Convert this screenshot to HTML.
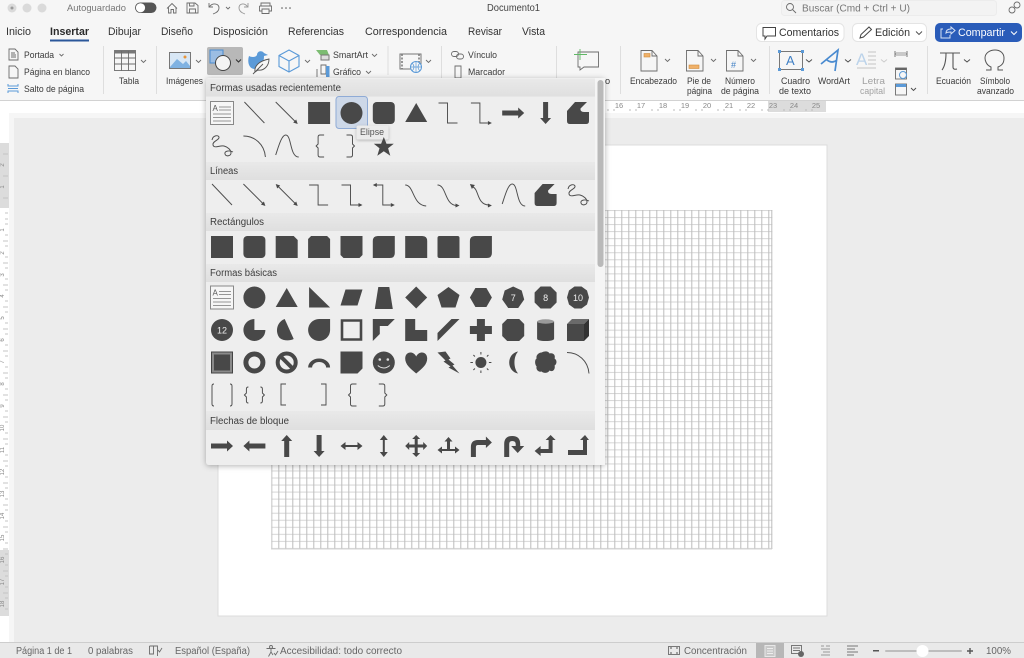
<!DOCTYPE html>
<html lang="es"><head><meta charset="utf-8"><title>Documento1</title>
<style>
html,body{margin:0;padding:0;background:#ececec;width:1024px;height:658px;overflow:hidden}
svg{display:block;position:absolute;left:0;top:0;filter:blur(.35px)}
text{font-family:"Liberation Sans",sans-serif;fill:#404040;font-size:9px}
.t{font-size:11px;fill:#333}
.s{font-size:9.8px;fill:#666}
.h{font-size:9.8px;fill:#3c3c3c}
.r{font-size:9.2px;fill:#3a3a3a}
.n{font-size:7.5px;fill:#888}
.ln{fill:none;stroke:#4c4c4c;stroke-width:.95}
.ic{fill:none;stroke:#6c6c6c;stroke-width:.9}
.bl{fill:none;stroke:#5b9ad8;stroke-width:1.1}
.d{fill:#484848}
</style></head><body>
<svg width="1024" height="658" viewBox="0 0 1024 658" xmlns="http://www.w3.org/2000/svg">
<defs>
<pattern id="grid" x="271.3" y="210" width="7" height="7.04" patternUnits="userSpaceOnUse">
<rect x="0" y="0" width="7" height="1" fill="#d6d6d6"/>
<rect x="0" y="0" width="1" height="7.04" fill="#bcbcbc"/>
</pattern>
<filter id="sh" x="-10%" y="-10%" width="120%" height="120%"><feDropShadow dx="0" dy="1" stdDeviation="3" flood-color="#000" flood-opacity=".3"/></filter>
<filter id="sh2" x="-20%" y="-20%" width="140%" height="140%"><feDropShadow dx="0" dy="1" stdDeviation="1.5" flood-color="#000" flood-opacity=".25"/></filter>
<linearGradient id="band" x1="0" y1="0" x2="0" y2="1"><stop offset="0" stop-color="#e9e9e9"/><stop offset="1" stop-color="#dfdfdf"/></linearGradient>
<g id="tb"><rect x="-11.5" y="-11.5" width="23" height="23" fill="#f6f6f6" stroke="#888"/><text x="-9.5" y="-2" style="font-size:8px;fill:#555">A</text><path d="M-3-6H9M-3-3H9M-9 1H9M-9 4.500H9M-9 8H9" stroke="#777" fill="none" stroke-width=".8"/></g>
<g id="line"><path class="ln" d="M-10-11L10 10"/></g>
<g id="arr"><path class="ln" d="M-11-11L9 9"/><path class="d" d="M11 11L6.500 9.500 9.500 6.500Z"/></g>
<g id="darr"><path class="ln" d="M-9-9L9 9"/><path class="d" d="M11 11L6.500 9.500 9.500 6.500ZM-11-11L-6.500-9.500-9.500-6.500Z"/></g>
<g id="elb"><path class="ln" d="M-10-10H-1V10H9"/></g>
<g id="elba"><path class="ln" d="M-10-10H-1V10H7"/><path class="d" d="M11 10L7 8V12Z"/></g>
<g id="elbd"><path class="ln" d="M-8-10H-1V10H7"/><path class="d" d="M11 10L7 8V12ZM-11-10L-7-12V-8Z"/></g>
<g id="cv"><path class="ln" d="M-11-10C-2-10-4 10 10 11"/></g>
<g id="cva"><path class="ln" d="M-11-10C-2-10-4 10 8 10.500"/><path class="d" d="M11 10.500L7 8.500V12.500Z"/></g>
<g id="cvd"><path class="ln" d="M-8-8C-2-6-4 10 8 10"/><path class="d" d="M11 10.500L7 8.500V12.500ZM-11-11L-6-10-9-6Z"/></g>
<path id="sq" class="d" d="M-11-11H11V11H-11Z"/>
<circle id="ci" class="d" r="11"/>
<rect id="rr" class="d" x="-11" y="-11" width="22" height="22" rx="4"/>
<path id="tr" class="d" d="M0-10L11 9H-11Z"/>
<path id="ra" class="d" d="M-11-2.500H5V-5.500L11 0 5 5.500V2.500H-11Z"/>
<path id="la" class="d" d="M11-2.500H-5V-5.500L-11 0-5 5.500V2.500H11Z"/>
<path id="da" class="d" d="M-2.500-11V5H-5.500L0 11 5.500 5H2.500V-11Z"/>
<path id="ua" class="d" d="M-2.500 11V-5H-5.500L0-11 5.500-5H2.500V11Z"/>
<path id="ff" class="d" d="M-11-2L-3-11H9L2.500-4.500Q2-1 6-1H11V8Q11 11 8 11H-8Q-11 11-11 8Z"/>
<g id="sc"><path class="ln" d="M-10-6C-9-11-4-11-3-9-2-6-10-5-9-1-8 3-2-1 2 0 6 1 9 4 9 7 9 10 4 11 3 8 2 5 7 4 11 6"/></g>
<g id="arc"><path class="ln" d="M-11-10C0-10 10-2 11 11"/></g>
<g id="wv"><path class="ln" d="M-11 9C-8 0-5-11-1-11 5-11 3 11 12 11"/></g>
<g id="lbc"><path class="ln" d="M5-11H1Q-1-11-1-9V-2L-3 0-1 2V9Q-1 11 1 11H5"/></g>
<g id="rbc"><path class="ln" d="M-5-11H-1Q1-11 1-9V-2L3 0 1 2V9Q1 11-1 11H-5"/></g>
<path id="star" class="d" d="M0-10L2.700-3.200H10L4.300 1.300 6.500 8.700 0 4.300-6.500 8.700-4.300 1.300-10-3.200H-2.700Z"/>
<path id="r2" class="d" d="M-11-11H7L11-7V11H-11Z"/>
<path id="r3" class="d" d="M-11-8L-8-11H8L11-8V11H-11Z"/>
<path id="r4" class="d" d="M-11-11H11V8L8 11H-8L-11 8Z"/>
<path id="r5" class="d" d="M-11-11H6Q11-11 11-6V11H-11Z"/>
<path id="r6" class="d" d="M-6-11H11V6Q11 11 6 11H-11V-6Q-11-11-6-11Z"/>
<path id="r7" class="d" d="M-9-11H9Q11-11 11-9V11H-9Q-11 11-11 9V-9Q-11-11-9-11Z"/>
<path id="para" class="d" d="M-6-8H11L6 8H-11Z"/>
<path id="rtri" class="d" d="M-10-11L11 9.500H-10Z"/>
<path id="trap" class="d" d="M-5.500-11H5.500L9 11H-9Z"/>
<path id="dia" class="d" d="M0-11L11 0 0 11-11 0Z"/>
<path id="pent" class="d" d="M0-10.500L11-2.500 7 10H-7L-11-2.500Z"/>
<path id="hex" class="d" d="M-5.500-9.500H5.500L11 0 5.500 9.500H-5.500L-11 0Z"/>
<path id="hept" class="d" d="M0-11L8.500-7 11 2 5 10.500H-5L-11 2-8.500-7Z"/>
<path id="oct" class="d" d="M-5-11H5L11-5V5L5 11H-5L-11 5V-5Z"/>
<path id="deca" class="d" d="M-3.500-11H3.500L9-7 11 0 9 7 3.500 11H-3.500L-9 7-11 0-9-7Z"/>
<path id="pie" class="d" d="M0-11A11 11 0 1 0 11 0H0Z"/>
<path id="chord" class="d" d="M-2-11C-10-8-12 2-7 8-3 11 3 11 7 9Z"/>
<path id="tear" class="d" d="M11-11V0A11 11 0 1 1 0-11Z"/>
<path id="frame" d="M-9.500-9.500H9.500V9.500H-9.500Z" fill="none" stroke="#484848" stroke-width="2.600"/>
<path id="half" class="d" d="M-11-11H11L4-4H-4V4L-11 11Z"/>
<path id="lsh" class="d" d="M-11-11H-1V0H11V11H-11Z"/>
<path id="diag" class="d" d="M-11 3L3-11H11L-11 11Z"/>
<path id="plus" class="d" d="M-4-11H4V-4H11V4H4V11H-4V4H-11V-4H-4Z"/>
<path id="pla" class="d" d="M-6-11H6L11-6V6L6 11H-6L-11 6V-6Z"/>
<g id="can"><path class="d" d="M-8.500-8.500V8.500Q-8.500 11 0 11 8.500 11 8.500 8.500V-8.500Z"/><ellipse cy="-8.500" rx="8.500" ry="2.200" fill="#9a9a9a"/></g>
<g id="cube"><path class="d" d="M-11-6H6V11H-11Z"/><path d="M-11-6L-6-11H11L6-6Z" fill="#6a6a6a"/><path d="M6-6L11-11V6L6 11Z" fill="#333"/></g>
<g id="bev"><rect x="-10.500" y="-10.500" width="21" height="21" fill="#8a8a8a" stroke="#444"/><rect x="-8" y="-8" width="16" height="16" class="d"/></g>
<circle id="don" r="8.500" fill="none" stroke="#484848" stroke-width="5"/>
<g id="no"><circle r="9" fill="none" stroke="#484848" stroke-width="4"/><path d="M-6-6L6 6" stroke="#484848" stroke-width="4"/></g>
<path id="bar" class="d" d="M-11 5A11 9 0 0 1 11 5H7A7 5.500 0 0 0-7 5Z"/>
<path id="fold" class="d" d="M-11-11H11V6L6 11H-11Z"/>
<g id="smile"><circle class="d" r="11"/><circle cx="-4" cy="-3" r="1.300" fill="#ddd"/><circle cx="4" cy="-3" r="1.300" fill="#ddd"/><path d="M-6 3Q0 8 6 3" stroke="#ddd" fill="none"/></g>
<path id="heart" class="d" d="M0 11C-6 6-11 2-11-4-11-11-3-12 0-6 3-12 11-11 11-4 11 2 6 6 0 11Z"/>
<path id="bolt" class="d" d="M-11-10L-3-11 2-4 0-3 6 2 4 3 11 11 0 5 2 4-5-1-3-2Z"/>
<g id="sun"><circle class="d" r="5.500"/><path stroke="#484848" d="M0-10.500V-8M0 8V10.500M-10.500 0H-8M8 0H10.500M-7.500-7.500L-6-6M6 6L7.500 7.500M-7.500 7.500L-6 6M6-6L7.500-7.500"/></g>
<path id="moon" class="d" d="M5-11C-7-9-7 9 5 11 0 6 0-6 5-11Z"/>
<path id="cloud" class="d" d="M-4-10C0-12 3-11 4-9 8-10 10-7 9-4 12-2 11 2 9 3 10 7 7 10 4 8 2 11-2 11-4 9-7 10-10 7-9 4-11 2-11-3-9-4-10-7-7-10-4-10Z"/>
<g id="bp"><path class="ln" d="M-8-11Q-10-11-10-9V9Q-10 11-8 11M8-11Q10-11 10-9V9Q10 11 8 11"/></g>
<g id="bcp"><path class="ln" d="M-6-8Q-8-8-8-6V-2L-10 0-8 2V6Q-8 8-6 8M6-8Q8-8 8-6V-2L10 0 8 2V6Q8 8 6 8"/></g>
<path id="lra" class="d" d="M-11 0L-6-4V-1H6V-4L11 0 6 4V1H-6V4Z"/>
<path id="uda" class="d" d="M0-11L4-6H1V6H4L0 11-4 6H-1V-6H-4Z"/>
<path id="qa" class="d" d="M0-11L4-7H1.500V-1.500H7V-4L11 0 7 4V1.500H1.500V7H4L0 11-4 7H-1.500V1.500H-7V4L-11 0-7-4V-1.500H-1.500V-7H-4Z"/>
<path id="lru" class="d" d="M0-9L4-4.500H1.500V3H6.500V0.500L11 4 6.500 7.500V5H-6.500V7.500L-11 4-6.500 0.500V3H-1.500V-4.500H-4Z"/>
<path id="bent" class="d" d="M-10 11V1Q-10-6-3-6H5V-9.500L11-3.500 5 2V-1H-3Q-5-1-5 1V11Z"/>
<path id="ut" class="d" d="M-9 11V-2Q-9-10-1-10 7-10 7-2V0H11L4.500 7-2 0H2.500V-2Q2.500-5-1-5-4-5-4-2V11Z"/>
<path id="lup" class="d" d="M-11 5L-5 0V3H3V-6H0L5-11 10-6H7V7H-5V10Z"/>
<path id="bup" class="d" d="M-10 4H5V-6H2L7-11 11-6H9V9H-10Z"/>
</defs>

<!-- base -->
<rect width="1024" height="658" fill="#ececec"/>
<rect width="1024" height="100" fill="#f6f6f6"/>
<rect y="100" width="1024" height="1" fill="#d2d2d2"/>
<!-- rulers area -->
<rect y="101" width="1024" height="12" fill="#fff"/>
<rect y="113" width="1024" height="5" fill="#f6f6f6"/>
<rect x="0" y="101" width="9" height="541" fill="#fff"/>
<rect x="9" y="113" width="5" height="529" fill="#f6f6f6"/>
<rect x="0" y="143" width="9" height="65" fill="#dcdcdc"/>
<rect x="0" y="550" width="9" height="66" fill="#dcdcdc"/>
<rect x="768" y="101" width="58" height="11" fill="#dcdcdc"/>
<g stroke="#bbb" stroke-width="1"><path d="M608 109v2M614 109v2M630 109v2M636 109v2M652 109v2M658 109v2M674 109v2M680 109v2M696 109v2M702 109v2M718 109v2M724 109v2M740 109v2M746 109v2M762 109v2M768 109v2M784 109v2M790 109v2M806 109v2M812 109v2"/></g>
<text class="n" x="619" y="108" text-anchor="middle">16</text><text class="n" x="641" y="108" text-anchor="middle">17</text><text class="n" x="663" y="108" text-anchor="middle">18</text><text class="n" x="685" y="108" text-anchor="middle">19</text><text class="n" x="707" y="108" text-anchor="middle">20</text><text class="n" x="729" y="108" text-anchor="middle">21</text><text class="n" x="751" y="108" text-anchor="middle">22</text><text class="n" x="773" y="108" text-anchor="middle">23</text><text class="n" x="794" y="108" text-anchor="middle">24</text><text class="n" x="816" y="108" text-anchor="middle">25</text>
<g stroke="#c4c4c4"><path d="M3 154h5M3 176h5M3 198h5M5 219h3M3 241h5M3 263h5M3 285h5M3 307h5M3 329h5M3 351h5M3 373h5M3 395h5M3 417h5M3 439h5M3 461h5M3 483h5M3 505h5M3 527h5M3 549h5M3 571h5M3 593h5M5 213h3M5 224h3M5 235h3M5 246h3M5 257h3M5 268h3M5 279h3M5 290h3M5 301h3M5 312h3M5 323h3M5 334h3M5 345h3M5 356h3M5 367h3M5 378h3M5 389h3M5 400h3M5 411h3M5 422h3M5 433h3M5 444h3M5 455h3M5 466h3M5 477h3M5 488h3M5 499h3M5 510h3M5 521h3M5 532h3M5 543h3M5 554h3M5 565h3M5 576h3M5 587h3M5 598h3M5 609h3"/></g>
<text class="n" style="font-size:6px" transform="translate(4,165) rotate(-90)" text-anchor="middle">2</text>
<text class="n" style="font-size:6px" transform="translate(4,187) rotate(-90)" text-anchor="middle">1</text>
<text class="n" style="font-size:6px" transform="translate(4,230) rotate(-90)" text-anchor="middle">1</text>
<text class="n" style="font-size:6px" transform="translate(4,253) rotate(-90)" text-anchor="middle">2</text>
<text class="n" style="font-size:6px" transform="translate(4,275) rotate(-90)" text-anchor="middle">3</text>
<text class="n" style="font-size:6px" transform="translate(4,296) rotate(-90)" text-anchor="middle">4</text>
<text class="n" style="font-size:6px" transform="translate(4,318) rotate(-90)" text-anchor="middle">5</text>
<text class="n" style="font-size:6px" transform="translate(4,340) rotate(-90)" text-anchor="middle">6</text>
<text class="n" style="font-size:6px" transform="translate(4,362) rotate(-90)" text-anchor="middle">7</text>
<text class="n" style="font-size:6px" transform="translate(4,384) rotate(-90)" text-anchor="middle">8</text>
<text class="n" style="font-size:6px" transform="translate(4,406) rotate(-90)" text-anchor="middle">9</text>
<text class="n" style="font-size:6px" transform="translate(4,428) rotate(-90)" text-anchor="middle">10</text>
<text class="n" style="font-size:6px" transform="translate(4,450) rotate(-90)" text-anchor="middle">11</text>
<text class="n" style="font-size:6px" transform="translate(4,472) rotate(-90)" text-anchor="middle">12</text>
<text class="n" style="font-size:6px" transform="translate(4,494) rotate(-90)" text-anchor="middle">13</text>
<text class="n" style="font-size:6px" transform="translate(4,516) rotate(-90)" text-anchor="middle">14</text>
<text class="n" style="font-size:6px" transform="translate(4,538) rotate(-90)" text-anchor="middle">15</text>
<text class="n" style="font-size:6px" transform="translate(4,560) rotate(-90)" text-anchor="middle">16</text>
<text class="n" style="font-size:6px" transform="translate(4,582) rotate(-90)" text-anchor="middle">17</text>
<text class="n" style="font-size:6px" transform="translate(4,604) rotate(-90)" text-anchor="middle">18</text>

<!-- page -->
<rect x="218" y="145" width="609" height="471" fill="#fff" stroke="#dcdcdc" stroke-width="1"/>
<rect x="271.300" y="210" width="501" height="339" fill="url(#grid)"/>
<path d="M771.800 210V549" stroke="#bcbcbc"/><path d="M271 549H772" stroke="#d6d6d6"/>

<!-- title bar -->
<circle cx="12" cy="8" r="4.500" fill="#dadada"/><circle cx="12" cy="8" r="1.500" fill="#9a9a9a"/>
<circle cx="27" cy="8" r="4.500" fill="#dadada"/><circle cx="42" cy="8" r="4.500" fill="#dadada"/>
<text x="67" y="11" textLength="59" lengthAdjust="spacingAndGlyphs" style="font-size:9.500px;fill:#777">Autoguardado</text>
<rect x="135" y="2.500" width="21.500" height="10.500" rx="5.200" fill="#555"/><circle cx="140.500" cy="7.800" r="4.600" fill="#fff"/>
<path class="ic" d="M167 8.500L172 3.500 177 8.500M168.500 7.500V13H171V9.500H173.500V13H176V7.500"/>
<path class="ic" d="M187 3H195L198 5.500V13H187ZM189.500 3V6H194V3M189.500 13V9H195.500V13"/>
<path class="ic" d="M209 3V7H213M209.500 6.500C213 2.500 219 3.500 219 8 219 11 216 13 213 14"/>
<path class="ic" d="M226 7L228 9 230 7"/>
<path class="ic" style="stroke:#999" d="M248 3V7H244M247.500 6.500C244 2.500 239 3.500 239 8 239 11 242 13 245 14"/>
<path class="ic" d="M261 6V3H270V6M259.500 6H271.500V11H269M262 11H259.500V6M262 9H269V13.500H262Z"/>
<circle cx="282" cy="8" r=".8" fill="#555"/><circle cx="286" cy="8" r=".8" fill="#555"/><circle cx="290" cy="8" r=".8" fill="#555"/>
<text x="487" y="11" textLength="53" lengthAdjust="spacingAndGlyphs" style="font-size:10px;fill:#444">Documento1</text>
<rect x="781.500" y="0.500" width="215" height="15" rx="3" fill="#f3f3f3" stroke="#ececec"/>
<circle cx="790" cy="7" r="3.500" class="ic"/><path class="ic" d="M792.500 9.500L796 13"/>
<text x="802" y="11.500" textLength="108" lengthAdjust="spacingAndGlyphs" style="font-size:10px;fill:#777">Buscar (Cmd + Ctrl + U)</text>
<circle cx="1012" cy="10" r="3" class="ic"/><circle cx="1017" cy="5" r="3" class="ic"/>

<!-- tabs -->
<text class="t" x="6" y="35" textLength="25" lengthAdjust="spacingAndGlyphs">Inicio</text>
<text class="t" x="50" y="35" textLength="39" lengthAdjust="spacingAndGlyphs" style="font-weight:bold;fill:#2a2a2a">Insertar</text>
<rect x="50" y="39.500" width="39" height="2" fill="#2b579a"/>
<text class="t" x="108" y="35" textLength="33" lengthAdjust="spacingAndGlyphs">Dibujar</text>
<text class="t" x="161" y="35" textLength="32" lengthAdjust="spacingAndGlyphs">Diseño</text>
<text class="t" x="213" y="35" textLength="55" lengthAdjust="spacingAndGlyphs">Disposición</text>
<text class="t" x="288" y="35" textLength="56" lengthAdjust="spacingAndGlyphs">Referencias</text>
<text class="t" x="365" y="35" textLength="82" lengthAdjust="spacingAndGlyphs">Correspondencia</text>
<text class="t" x="468" y="35" textLength="34" lengthAdjust="spacingAndGlyphs">Revisar</text>
<text class="t" x="522" y="35" textLength="23" lengthAdjust="spacingAndGlyphs">Vista</text>

<!-- top right buttons -->
<rect x="756.500" y="23.500" width="87.500" height="18" rx="5" fill="#fff" stroke="#e4e4e4"/>
<path d="M763 27.500H775.500V36H767L765 39V36H763Z" fill="none" stroke="#444"/>
<text x="779" y="36" textLength="60" lengthAdjust="spacingAndGlyphs" style="font-size:11px;fill:#333">Comentarios</text>
<rect x="852.500" y="23.500" width="74" height="18" rx="5" fill="#fff" stroke="#e4e4e4"/>
<path d="M860 38L861 34.500 869 27 871.500 29.500 863.500 37Z" fill="none" stroke="#444"/>
<text x="875" y="36" textLength="35" lengthAdjust="spacingAndGlyphs" style="font-size:11px;fill:#333">Edición</text>
<path class="ln" d="M916 31.500L919 34.500 922 31.500"/>
<rect x="935" y="23" width="87" height="19" rx="5" fill="#2a5cb9"/>
<path d="M943 29H941V38H950V35M946 33C946 30 948 29 951 29V27L955 30.500 951 34V32C949 32 947 32 946 33Z" fill="none" stroke="#d7e2f5"/>
<text x="958" y="36" textLength="47" lengthAdjust="spacingAndGlyphs" style="font-size:11px;fill:#fff">Compartir</text>
<path d="M1011 31.500L1014 34.500 1017 31.500" fill="none" stroke="#fff"/>

<!-- separators -->
<path stroke="#dedede" d="M103.500 46V94M156.500 46V94M388 46V75M441.500 46V94M556.500 46V94M620.500 46V94M769.500 46V94M927.500 46V94"/>

<!-- ribbon left -->
<path class="ic" d="M9 49H15L18 52V60H9ZM11 53H15M11 55H16M11 57H16"/>
<text class="r" x="24" y="58" textLength="30" lengthAdjust="spacingAndGlyphs">Portada</text>
<path class="ic" d="M59.500 54L61.500 56 63.500 54"/>
<path class="ic" d="M9 66H15L18 69V78H9Z"/>
<text class="r" x="24" y="75" textLength="66" lengthAdjust="spacingAndGlyphs">Página en blanco</text>
<path d="M8 84V86H18V84M8 93V91H18V93M8 88.500H18" fill="none" stroke="#5b9ad8"/>
<text class="r" x="24" y="92" textLength="60" lengthAdjust="spacingAndGlyphs">Salto de página</text>
<rect x="114.500" y="50.500" width="21" height="20" class="ic"/><rect x="114.500" y="50.500" width="21" height="3" fill="#777"/>
<path class="ic" d="M114 58H136M114 64H136M121.500 51V71M128.500 51V71"/>
<path class="ic" d="M141 60L143.500 62.500 146 60"/>
<text class="r" x="119" y="84" textLength="20" lengthAdjust="spacingAndGlyphs">Tabla</text>
<rect x="169.500" y="52.500" width="21" height="16" fill="#d8e7f5" stroke="#777"/><path d="M170 67L177 59 183 64 186 61 190 66V68H170Z" fill="#7fb2e2"/><circle cx="185" cy="57" r="1.500" fill="#e8943a"/>
<path class="ic" d="M196 60L198.500 62.500 201 60"/>
<text class="r" x="166" y="84" textLength="37" lengthAdjust="spacingAndGlyphs">Imágenes</text>
<rect x="207" y="47" width="36" height="28" rx="2" fill="#b8b8b8"/>
<rect x="210" y="50" width="13" height="13" fill="#9bbde3" stroke="#4a8bd0"/>
<circle cx="223" cy="63" r="7.500" fill="#f4f4f4" stroke="#444"/>
<path d="M236 59.500L238.500 62 241 59.500" fill="none" stroke="#333" stroke-width="1.100"/>
<!-- icons bird/leaf -->
<path d="M249 56C251 57 255 58 257 55 257 51 262 50 264 53L268 55 264 56C264 62 262 68 255 69 249 69 247 62 249 56Z" fill="#5b9ad8"/>
<path d="M255 72C254 66 259 61 269 59 269 66 264 71 258 70Z" fill="#f6f6f6" stroke="#555" stroke-width=".9"/><path d="M253 74L263 64" stroke="#555" stroke-width=".9"/>
<path class="bl" d="M289 50L299 55.500V66.500L289 72 279 66.500V55.500ZM279 55.500L289 61 299 55.500M289 61V72"/>
<path class="ic" d="M305 60L307.500 62.500 310 60"/>
<path d="M316 50H327L329 55H320Z" fill="#7cbc72"/><rect x="321" y="55" width="8" height="5" fill="#ddd" stroke="#777"/>
<text class="r" x="333" y="58" textLength="35" lengthAdjust="spacingAndGlyphs">SmartArt</text>
<path class="ic" d="M372 54L374.500 56.500 377 54"/>
<path d="M317 77V69M321 74H326V65H321Z" class="ic"/><rect x="326" y="66" width="3.500" height="11" fill="#5b9ad8"/>
<text class="r" x="333" y="75" textLength="28" lengthAdjust="spacingAndGlyphs">Gráfico</text>
<path class="ic" d="M366 71L368.500 73.500 371 71"/>
<!-- online video -->
<rect x="400" y="54" width="21" height="15" fill="none" stroke="#777"/><path d="M402 54v15M419 54v15" stroke="#777" stroke-dasharray="2 1.500" stroke-width="1.500"/>
<circle cx="416" cy="67" r="5.500" fill="#f6f6f6" stroke="#5b9ad8"/><path class="bl" style="stroke-width:.7" d="M410.500 67H421.500M416 61.500V72.500M412 63Q416 67 412 71M420 63Q416 67 420 71"/>
<path class="ic" d="M426 60L428.500 62.500 431 60"/>
<!-- links -->
<rect x="451.500" y="51.500" width="7" height="5" rx="2.500" class="ic"/><rect x="456.500" y="54" width="7" height="5" rx="2.500" class="ic"/>
<text class="r" x="468" y="58" textLength="29" lengthAdjust="spacingAndGlyphs">Vínculo</text>
<path class="ic" d="M455 66H461V78H455Z"/>
<text class="r" x="468" y="75" textLength="37" lengthAdjust="spacingAndGlyphs">Marcador</text>
<!-- comment -->
<path class="ic" d="M578 52H598.500V67H584L580 70V67H578Z"/>
<path stroke="#5fb865" d="M580 49V60M574 54.500H587" fill="none" stroke-width=".9"/>
<text class="r" x="605" y="84">o</text>
<!-- encabezado -->
<path class="ic" d="M641 50.500H652L657 56V71H641Z"/><path class="ic" d="M652 50.500V56H657"/><rect x="644" y="53.500" width="6" height="3.500" fill="#f0b169" stroke="#d08a3c" stroke-width=".6"/>
<path class="ic" d="M665 59L667.500 61.500 670 59"/>
<text class="r" x="630" y="84" textLength="47" lengthAdjust="spacingAndGlyphs">Encabezado</text>
<path class="ic" d="M686.500 50.500H698L703 56V71H686.500Z"/><path class="ic" d="M698 50.500V56H703"/><rect x="689" y="65" width="10" height="3.500" fill="#f0b169" stroke="#d08a3c" stroke-width=".6"/>
<path class="ic" d="M711 59L713.500 61.500 716 59"/>
<text class="r" x="687" y="84" textLength="24" lengthAdjust="spacingAndGlyphs">Pie de</text>
<text class="r" x="687" y="94" textLength="25" lengthAdjust="spacingAndGlyphs">página</text>
<path class="ic" d="M726.500 50.500H738L743 56V71H726.500Z"/><path class="ic" d="M738 50.500V56H743"/>
<text x="731" y="68" style="font-size:9px;fill:#3f7fc4">#</text>
<path class="ic" d="M751 59L753.500 61.500 756 59"/>
<text class="r" x="725" y="84" textLength="30" lengthAdjust="spacingAndGlyphs">Número</text>
<text class="r" x="721" y="94" textLength="38" lengthAdjust="spacingAndGlyphs">de página</text>
<!-- textbox -->
<rect x="779.500" y="51.500" width="23" height="18" fill="none" stroke="#777"/>
<path d="M778 50h3v3h-3zM801 50h3v3h-3zM778 68h3v3h-3zM801 68h3v3h-3z" fill="#5b9ad8"/>
<text x="786" y="65" style="font-size:13px;fill:#3f7fc4">A</text>
<path class="ln" d="M806 59.500L809 62 812 59.500"/>
<text class="r" x="781" y="84" textLength="29" lengthAdjust="spacingAndGlyphs">Cuadro</text>
<text class="r" x="779" y="94" textLength="32" lengthAdjust="spacingAndGlyphs">de texto</text>
<!-- wordart -->
<path d="M821 64L838 50 835 71M827 60Q832 64 837 60" fill="none" stroke="#4a8bd0" stroke-width="1.700"/>
<path class="ln" d="M845 59.500L848 62 851 59.500"/>
<text class="r" x="818" y="84" textLength="32" lengthAdjust="spacingAndGlyphs">WordArt</text>
<!-- letra capital -->
<text x="856" y="65" style="font-size:17px;fill:#bcd3ea">A</text>
<path stroke="#c4c4c4" d="M868 52H876M868 56H876M868 60H876M868 64H876M857 68H876"/>
<path d="M881 59.500L884 62 887 59.500" fill="none" stroke="#ccc"/>
<text class="r" x="862" y="84" textLength="23" lengthAdjust="spacingAndGlyphs" style="fill:#a2a2a2">Letra</text>
<text class="r" x="860" y="94" textLength="25" lengthAdjust="spacingAndGlyphs" style="fill:#a2a2a2">capital</text>
<path class="ic" d="M895 51V57M907 51V57M895 54H907"/><rect x="896" y="52" width="10" height="4" fill="#c9c9c9"/>
<rect x="895.500" y="68" width="11" height="11" class="ic"/><rect x="895.500" y="68" width="11" height="2" fill="#666"/><circle cx="903" cy="75" r="3.500" fill="#f6f6f6" stroke="#5b9ad8"/>
<rect x="895.500" y="84" width="11" height="11" class="ic"/><rect x="896" y="84" width="10" height="3" fill="#5b9ad8"/>
<path class="ln" d="M911 88L913.500 90.500 916 88"/>
<!-- equation -->
<path d="M940 53H960M946 53C946 60 945 66 942 70M953 53V67Q953 70 957 69" fill="none" stroke="#555" stroke-width="1.100"/>
<path class="ln" d="M964 59.500L967 62 970 59.500"/>
<text class="r" x="936" y="84" textLength="35" lengthAdjust="spacingAndGlyphs">Ecuación</text>
<path d="M986 70H991V67C986 65 985 60 985 58 985 53 990 50 995 50 1000 50 1004 53 1004 58 1004 62 1003 65 998 67V70H1003" fill="none" stroke="#555" stroke-width="1"/>
<text class="r" x="980" y="84" textLength="30" lengthAdjust="spacingAndGlyphs">Símbolo</text>
<text class="r" x="977" y="94" textLength="37" lengthAdjust="spacingAndGlyphs">avanzado</text>

<!-- shapes popup -->
<rect x="206" y="78" width="399" height="387" rx="3" fill="#eeeeee" filter="url(#sh)"/>
<rect x="595" y="78" width="10" height="387" fill="#f5f5f5"/>
<rect x="597.500" y="80" width="6" height="187" rx="3" fill="#b9b9b9"/>
<rect x="206" y="79" width="389" height="17.500" fill="url(#band)"/>
<rect x="206" y="162" width="389" height="18" fill="url(#band)"/>
<rect x="206" y="213" width="389" height="18" fill="url(#band)"/>
<rect x="206" y="264" width="389" height="18" fill="url(#band)"/>
<rect x="206" y="411" width="389" height="19" fill="url(#band)"/>
<text class="h" x="210" y="91" textLength="131" lengthAdjust="spacingAndGlyphs">Formas usadas recientemente</text>
<text class="h" x="210" y="174" textLength="28" lengthAdjust="spacingAndGlyphs">Líneas</text>
<text class="h" x="210" y="225" textLength="54" lengthAdjust="spacingAndGlyphs">Rectángulos</text>
<text class="h" x="210" y="276" textLength="67" lengthAdjust="spacingAndGlyphs">Formas básicas</text>
<text class="h" x="210" y="424" textLength="79" lengthAdjust="spacingAndGlyphs">Flechas de bloque</text>

<rect x="336" y="96.500" width="31.500" height="32" rx="3" fill="#cdd8e8" stroke="#8fabd6"/>

<!-- row 1 -->
<use href="#tb" x="222" y="113"/><use href="#line" x="254.400" y="113"/><use href="#arr" x="286.700" y="113"/><use href="#sq" x="319.100" y="113"/><use href="#ci" x="351.500" y="113"/><use href="#rr" x="383.800" y="113"/><use href="#tr" x="416.200" y="113"/><use href="#elb" x="448.500" y="113"/><use href="#elba" x="480.900" y="113"/><use href="#ra" x="513.200" y="113"/><use href="#da" x="545.600" y="113" /><use href="#ff" x="578" y="113"/>
<!-- row 2 -->
<use href="#sc" x="222" y="146"/><use href="#arc" x="254.400" y="146"/><use href="#wv" x="286.700" y="146"/><use href="#lbc" x="319.100" y="146"/><use href="#rbc" x="351.500" y="146"/>
<!-- tooltip -->
<rect x="356.500" y="125.500" width="32" height="14" rx="2" fill="#ebebeb" filter="url(#sh2)"/>
<text x="360" y="135" textLength="24" lengthAdjust="spacingAndGlyphs" style="font-size:8.800px;fill:#555">Elipse</text>
<use href="#star" x="383.800" y="147"/>
<!-- lineas -->
<use href="#line" x="222" y="195"/><use href="#arr" x="254.400" y="195"/><use href="#darr" x="286.700" y="195"/><use href="#elb" x="319.100" y="195"/><use href="#elba" x="351.500" y="195"/><use href="#elbd" x="383.800" y="195"/><use href="#cv" x="416.200" y="195"/><use href="#cva" x="448.500" y="195"/><use href="#cvd" x="480.900" y="195"/><use href="#wv" x="513.200" y="195"/><use href="#ff" x="545.600" y="195"/><use href="#sc" x="578" y="195"/>
<!-- rectangulos -->
<use href="#sq" x="222" y="247"/><use href="#rr" x="254.400" y="247"/><use href="#r2" x="286.700" y="247"/><use href="#r3" x="319.100" y="247"/><use href="#r4" x="351.500" y="247"/><use href="#r6" x="383.800" y="247"/><use href="#r5" x="416.200" y="247"/><use href="#r7" x="448.500" y="247"/><use href="#r6" x="480.900" y="247"/>
<!-- basicas 1 -->
<use href="#tb" x="222" y="297.500"/><use href="#ci" x="254.400" y="297.500"/><use href="#tr" x="286.700" y="298"/><use href="#rtri" x="319.100" y="298"/><use href="#para" x="351.500" y="297.500"/><use href="#trap" x="383.800" y="298"/><use href="#dia" x="416.200" y="297.500"/><use href="#pent" x="448.500" y="297.500"/><use href="#hex" x="480.900" y="297.500"/><use href="#hept" x="513.200" y="297.500"/><use href="#oct" x="545.600" y="297.500"/><use href="#deca" x="578" y="297.500"/>
<text x="513.200" y="301" text-anchor="middle" style="font-size:9px;fill:#eee">7</text>
<text x="545.600" y="301" text-anchor="middle" style="font-size:9px;fill:#eee">8</text>
<text x="578" y="301" text-anchor="middle" style="font-size:9px;fill:#eee">10</text>
<!-- basicas 2 -->
<use href="#ci" x="222" y="330"/><text x="222" y="333.500" text-anchor="middle" style="font-size:9px;fill:#eee">12</text>
<use href="#pie" x="254.400" y="330"/><use href="#chord" x="286.700" y="330"/><use href="#tear" x="319.100" y="330"/><use href="#frame" x="351.500" y="330"/><use href="#half" x="383.800" y="330"/><use href="#lsh" x="416.200" y="330"/><use href="#diag" x="448.500" y="330"/><use href="#plus" x="480.900" y="330"/><use href="#pla" x="513.200" y="330"/><use href="#can" x="545.600" y="330"/><use href="#cube" x="578" y="330"/>
<!-- basicas 3 -->
<use href="#bev" x="222" y="362.500"/><use href="#don" x="254.400" y="362.500"/><use href="#no" x="286.700" y="362.500"/><use href="#bar" x="319.100" y="362.500"/><use href="#fold" x="351.500" y="362.500"/><use href="#smile" x="383.800" y="362.500"/><use href="#heart" x="416.200" y="362.500"/><use href="#bolt" x="448.500" y="362.500"/><use href="#sun" x="480.900" y="362.500"/><use href="#moon" x="513.200" y="362.500"/><use href="#cloud" x="545.600" y="362.500"/><use href="#arc" x="578" y="362.500"/>
<!-- basicas 4 -->
<use href="#bp" x="222" y="395"/><use href="#bcp" x="254.400" y="395"/>
<path class="ln" d="M286 384H281V405H286"/><path class="ln" d="M321 384H326V405H321"/>
<use href="#lbc" x="351.500" y="395"/><use href="#rbc" x="383.800" y="395"/>
<!-- flechas -->
<use href="#ra" x="222" y="446"/><use href="#la" x="254.400" y="446"/><use href="#ua" x="286.700" y="446"/><use href="#da" x="319.100" y="446"/><use href="#lra" x="351.500" y="446"/><use href="#uda" x="383.800" y="446"/><use href="#qa" x="416.200" y="446"/><use href="#lru" x="448.500" y="446"/><use href="#bent" x="480.900" y="446"/><use href="#ut" x="513.200" y="446"/><use href="#lup" x="545.600" y="446"/><use href="#bup" x="578" y="446"/>

<!-- status bar -->
<rect y="642" width="1024" height="16" fill="#e9e9e9"/>
<rect y="642" width="1024" height="1" fill="#cdcdcd"/>
<text class="s" x="16" y="654" textLength="56" lengthAdjust="spacingAndGlyphs">Página 1 de 1</text>
<text class="s" x="88" y="654" textLength="45" lengthAdjust="spacingAndGlyphs">0 palabras</text>
<path class="ic" d="M149.500 646H157.500V656M153.500 646V654H149.500V646M158 650L159.500 652 162 648"/>
<text class="s" x="175" y="654" textLength="75" lengthAdjust="spacingAndGlyphs">Español (España)</text>
<circle cx="271" cy="647" r="1.500" class="ic"/><path class="ic" d="M266.500 648.500H275.500M271 649V652L268.500 656.500M271 652L273 655M274 653L275.500 655 278 651"/>
<text class="s" x="280" y="654" textLength="122" lengthAdjust="spacingAndGlyphs">Accesibilidad: todo correcto</text>
<rect x="668.500" y="646.500" width="11" height="8" class="ic"/><path d="M670 648h2M670 653h2M676 648h2M676 653h2" stroke="#555"/>
<text class="s" x="684" y="654" textLength="63" lengthAdjust="spacingAndGlyphs">Concentración</text>
<rect x="756" y="643" width="28" height="15" fill="#b7b7b7"/>
<rect x="765" y="645.500" width="10" height="11" fill="#c9c9c9" stroke="#e8e8e8"/><path d="M767 648.500h6M767 651h6M767 653.500h6" stroke="#eee"/>
<rect x="791.500" y="645.500" width="10" height="8" fill="none" stroke="#777"/><path d="M793 648h7M793 650.500h7" stroke="#777"/><circle cx="801" cy="654" r="3" fill="#666"/>
<path stroke="#999" d="M821 646h3M826 646h4M821 649h9M823 652h7M821 655h9"/>
<path stroke="#777" d="M847 646h11M847 649h8M847 652h11M847 655h7"/>
<rect x="873" y="650" width="6" height="1.500" fill="#555"/>
<rect x="885" y="650" width="77" height="2" rx="1" fill="#bdbdbd"/>
<circle cx="922.500" cy="651" r="6" fill="#fff"/>
<path d="M967 651h6M970 648v6" stroke="#555" stroke-width="1.400"/>
<text class="s" x="986" y="654" textLength="25" lengthAdjust="spacingAndGlyphs">100%</text>
</svg>
</body></html>
